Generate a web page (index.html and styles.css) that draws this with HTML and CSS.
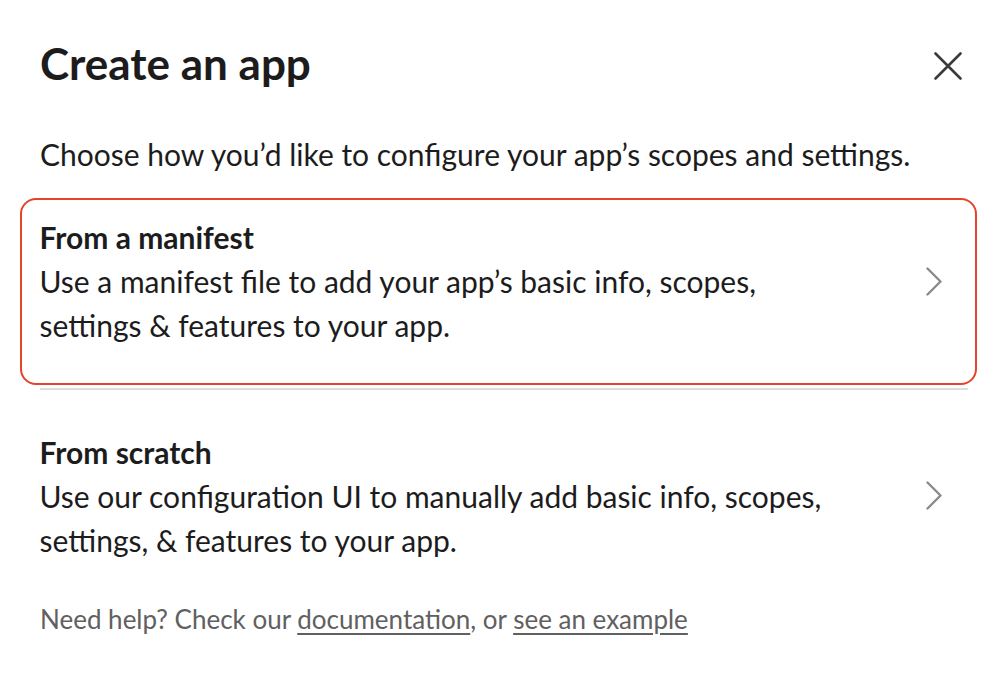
FILE: index.html
```html
<!DOCTYPE html>
<html lang="en">
<head>
<meta charset="utf-8">
<title>Create an app</title>
<link rel="stylesheet" href="styles.css">
</head>
<body>
<div class="modal">
  <div class="modal-header">
    <h1 class="modal-title">Create an app</h1>
    <button class="close-btn" aria-label="Close">
      <svg width="28" height="28" viewBox="0 0 28 28" fill="none" stroke="#3b3b3c" stroke-width="2.6" stroke-linecap="round">
        <path d="M1.5 1.5 L26.5 26.5 M26.5 1.5 L1.5 26.5"/>
      </svg>
    </button>
  </div>
  <p class="intro">Choose how you’d like to configure your app’s scopes and settings.</p>
  <div class="option option-selected">
    <div class="option-text">
      <div class="option-title">From a manifest</div>
      <div class="option-desc">Use a manifest file to add your app’s basic info, scopes, settings &amp; features to your app.</div>
    </div>
    <svg class="chevron" width="16" height="29" viewBox="0 0 16 29" fill="none" stroke="#8a8a8a" stroke-width="2.4" stroke-linecap="round" stroke-linejoin="round">
      <path d="M1.5 1.5 L14.5 14.5 L1.5 27.5"/>
    </svg>
  </div>
  <div class="divider"></div>
  <div class="option">
    <div class="option-text">
      <div class="option-title">From scratch</div>
      <div class="option-desc">Use our configuration UI to manually add basic info, scopes, settings, &amp; features to your app.</div>
    </div>
    <svg class="chevron" width="16" height="29" viewBox="0 0 16 29" fill="none" stroke="#8a8a8a" stroke-width="2.4" stroke-linecap="round" stroke-linejoin="round">
      <path d="M1.5 1.5 L14.5 14.5 L1.5 27.5"/>
    </svg>
  </div>
  <p class="help">Need help? Check our <a href="#">documentation</a>, or <a href="#">see an example</a></p>
</div>
</body>
</html>
```

FILE: styles.css
```css
html, body {
  margin: 0;
  padding: 0;
  background: #ffffff;
}
body {
  font-family: Lato, "Noto Sans", sans-serif;
  color: #1d1c1d;
}
.modal {
  padding: 36.7px 34px 0 40px;
}
.modal-header {
  display: flex;
  justify-content: space-between;
  align-items: flex-start;
}
.modal-title {
  margin: 0;
  font-size: 44px;
  line-height: 52px;
  font-weight: 700;
}
.close-btn {
  width: 40px;
  height: 40px;
  margin-top: 9.8px;
  padding: 0;
  border: 0;
  background: none;
  display: flex;
  align-items: center;
  justify-content: center;
  cursor: pointer;
}
.intro {
  margin: 43.5px 0 0 0;
  font-size: 30px;
  line-height: 44px;
}
.option {
  display: flex;
  align-items: center;
  margin: 22.3px -9px 0 -20px;
  padding: 14.7px 33.5px 36px 17.5px;
  border: 2.5px solid transparent;
  border-radius: 16px;
}
.option-selected {
  border-color: #e6442a;
}
.option-text {
  flex: 1;
}
.option-title {
  font-size: 30px;
  line-height: 44px;
  font-weight: 700;
}
.option-desc {
  font-size: 30px;
  line-height: 44px;
  max-width: 800px;
}
.chevron {
  flex: none;
}
.divider {
  height: 2px;
  margin-top: 2.5px;
  background: #dddddd;
}
.divider + .option {
  margin-top: 23.5px;
}
.help {
  margin: 1px 0 0 0;
  font-size: 26px;
  line-height: 36px;
  color: #616061;
}
.help a {
  color: #616061;
  text-decoration: underline;
  text-underline-offset: 4px;
  text-decoration-thickness: 1.5px;
}
```
